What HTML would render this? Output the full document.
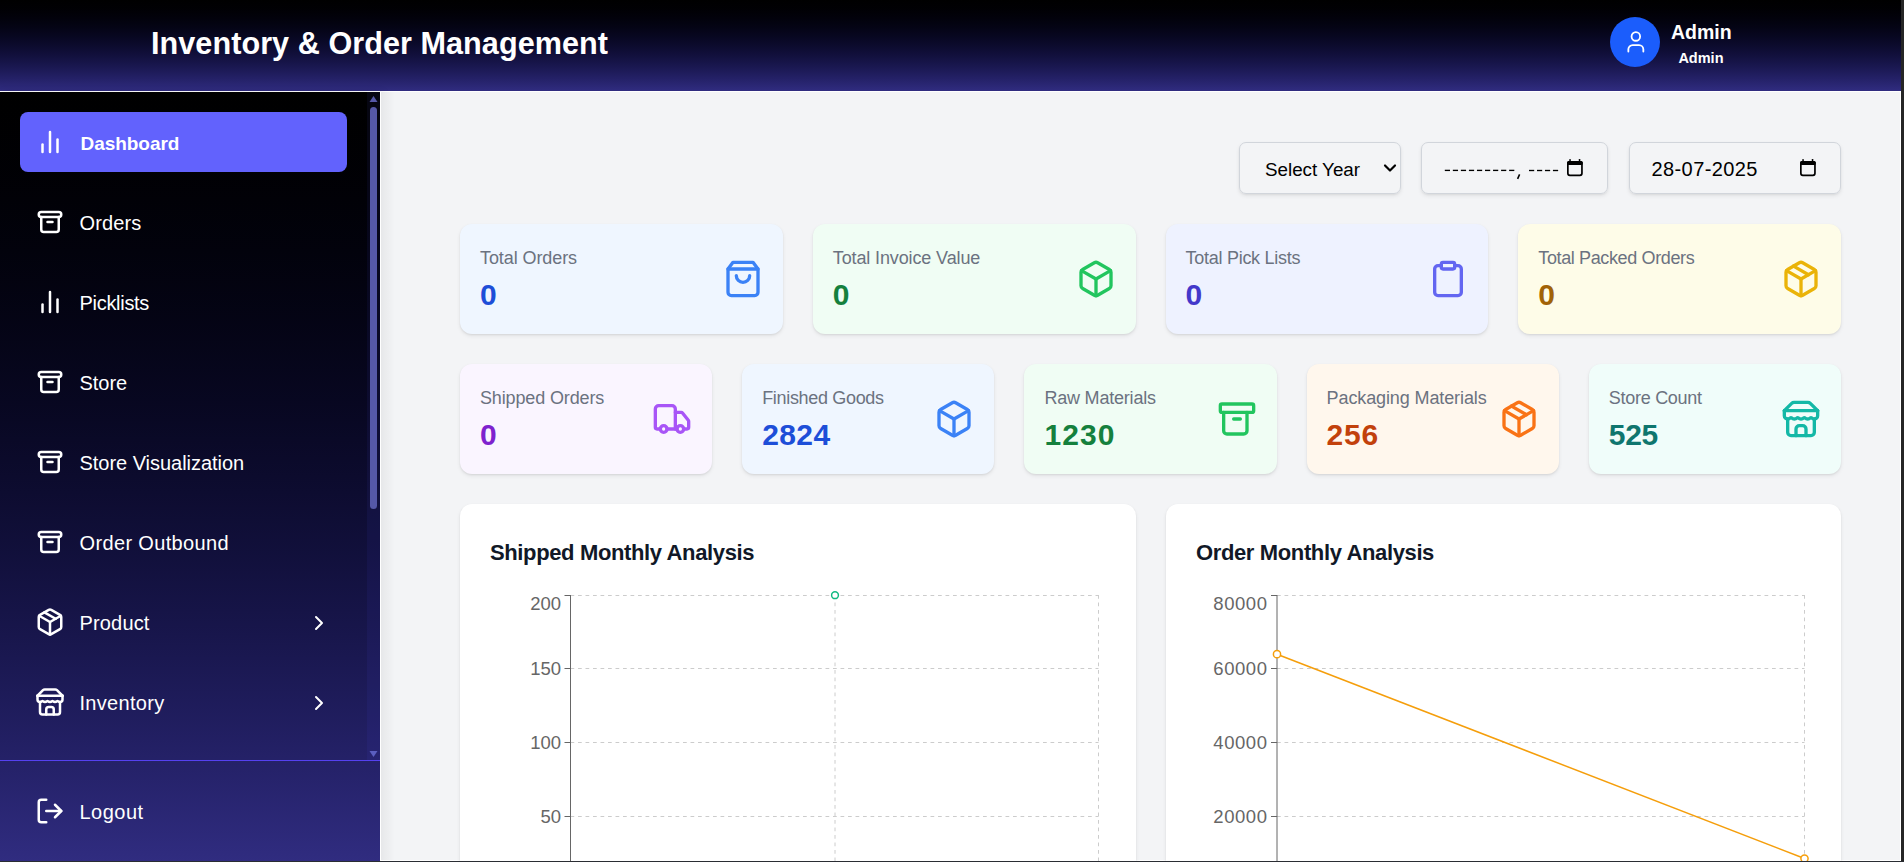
<!DOCTYPE html><html><head><meta charset="utf-8"><style>
*{box-sizing:border-box;margin:0;padding:0}
html,body{width:1904px;height:862px;overflow:hidden;background:#262626}
body{position:relative;font-family:"Liberation Sans",sans-serif}
.t{position:absolute;line-height:1;white-space:nowrap}
.ic{position:absolute;overflow:visible}
#hdr{position:absolute;left:0;top:0;width:1901px;height:92px;background:linear-gradient(to bottom,rgb(0.0,0.0,0.0) 0%,rgb(0.5,0.4,4.0) 10%,rgb(1.9,1.8,11.4) 20%,rgb(4.3,4.0,21.0) 30%,rgb(7.7,7.0,32.4) 40%,rgb(12.0,11.0,45.3) 50%,rgb(17.3,15.8,59.5) 60%,rgb(23.5,21.6,75.0) 70%,rgb(30.7,28.2,91.6) 80%,rgb(38.9,35.6,109.3) 90%,rgb(48.0,44.0,128.0) 100%);border-bottom:1px solid #fff}
#avatar{position:absolute;left:1610px;top:17px;width:50px;height:50px;border-radius:50%;background:#1b5dfc}
#side{position:absolute;left:0;top:92px;width:381px;height:770px;background:linear-gradient(to bottom,rgb(0.0,0.0,0.0) 0%,rgb(0.5,0.4,4.0) 10%,rgb(1.9,1.8,11.4) 20%,rgb(4.3,4.0,21.0) 30%,rgb(7.7,7.0,32.4) 40%,rgb(12.0,11.0,45.3) 50%,rgb(17.3,15.8,59.5) 60%,rgb(23.5,21.6,75.0) 70%,rgb(30.7,28.2,91.6) 80%,rgb(38.9,35.6,109.3) 90%,rgb(48.0,44.0,128.0) 100%);border-right:1px solid #fff;box-shadow:2px 0 8px rgba(0,0,0,.10)}
#main{position:absolute;left:381px;top:92px;width:1520px;height:769px;background:#f3f4f6;border-right:1px solid #fff;border-bottom:1px solid #fff}
#track{position:absolute;left:367px;top:92px;width:13px;height:668px;background:rgba(90,80,255,.07)}
#thumb{position:absolute;left:370px;top:107px;width:7px;height:402px;border-radius:4px;background:#5558a8}
#active{position:absolute;left:20px;top:112px;width:327px;height:60px;border-radius:8px;background:#6262fd}
#sep{position:absolute;left:0;top:760px;width:380px;height:1px;background:#5541f0}
.fld{position:absolute;border:1px solid #d1d5db;border-radius:7px;box-shadow:0 2px 4px rgba(0,0,0,.07),0 1px 2px rgba(0,0,0,.05)}
.card{position:absolute;border-radius:12px;box-shadow:0 2px 4px rgba(0,0,0,.07),0 1px 2px rgba(0,0,0,.07)}
.chart{position:absolute;border-radius:12px;background:#fff;box-shadow:0 2px 4px rgba(0,0,0,.07),0 1px 2px rgba(0,0,0,.07)}
#msh{position:absolute;left:381px;top:92px;width:14px;height:768px;background:linear-gradient(to right,rgba(0,0,0,.05),rgba(0,0,0,0))}
#fr{position:absolute;left:1901px;top:0;width:3px;height:862px;background:#262626}
#fb{position:absolute;left:0;top:861px;width:1904px;height:1px;background:#2a2d33}
</style></head><body><div id="hdr"></div>
<div class="t" style="left:151.00px;top:28.00px;font-size:30.6px;color:#fff;font-weight:700;letter-spacing:0.05px">Inventory &amp; Order Management</div>
<div id="avatar"></div>
<svg class="ic" style="left:1622.6px;top:28.8px;width:25.7px;height:25.7px" viewBox="0 0 24 24" fill="none" stroke="#fff" stroke-width="1.7" stroke-linecap="round" stroke-linejoin="round"><path d="M19 21v-2a4 4 0 0 0-4-4H9a4 4 0 0 0-4 4v2"/><circle cx="12" cy="7" r="4"/></svg>
<div class="t" style="left:1671.00px;top:23.29px;font-size:19.5px;color:#fff;font-weight:700;">Admin</div>
<div class="t" style="left:1678.40px;top:50.53px;font-size:14.5px;color:#fff;font-weight:700;">Admin</div>
<div id="side"></div>
<div id="track"></div><div id="thumb"></div>
<svg class="ic" style="left:367px;top:92px;width:13px;height:668px" viewBox="0 0 13 668"><path d="M2.5 10 L10.5 10 L6.5 4 Z" fill="#5558a8"/><path d="M2.5 659 L10.5 659 L6.5 665 Z" fill="#5b5fc0"/></svg>
<div id="active"></div>
<svg class="ic" style="left:35px;top:127px;width:30px;height:30px" viewBox="0 0 24 24" fill="none" stroke="#fff" stroke-width="2" stroke-linecap="round" stroke-linejoin="round"><line x1="18" x2="18" y1="20" y2="10"/><line x1="12" x2="12" y1="20" y2="4"/><line x1="6" x2="6" y1="20" y2="14"/></svg>
<div class="t" style="left:80.50px;top:133.72px;font-size:19px;color:#fff;font-weight:700;letter-spacing:-0.049px">Dashboard</div>
<svg class="ic" style="left:35px;top:207px;width:30px;height:30px" viewBox="0 0 24 24" fill="none" stroke="#fff" stroke-width="2" stroke-linecap="round" stroke-linejoin="round"><path d="M3 6a2 2 0 0 1 2-2h14a2 2 0 0 1 2 2a2 2 0 0 1-2 2h-14a2 2 0 0 1-2-2z"/><path d="M5 8v10a2 2 0 0 0 2 2h10a2 2 0 0 0 2-2v-10"/><path d="M10 12h4"/></svg>
<div class="t" style="left:79.50px;top:213.07px;font-size:20px;color:#fff;font-weight:400;letter-spacing:0.12px">Orders</div>
<svg class="ic" style="left:35px;top:287px;width:30px;height:30px" viewBox="0 0 24 24" fill="none" stroke="#fff" stroke-width="2" stroke-linecap="round" stroke-linejoin="round"><line x1="18" x2="18" y1="20" y2="10"/><line x1="12" x2="12" y1="20" y2="4"/><line x1="6" x2="6" y1="20" y2="14"/></svg>
<div class="t" style="left:79.50px;top:293.07px;font-size:20px;color:#fff;font-weight:400;letter-spacing:-0.299px">Picklists</div>
<svg class="ic" style="left:35px;top:367px;width:30px;height:30px" viewBox="0 0 24 24" fill="none" stroke="#fff" stroke-width="2" stroke-linecap="round" stroke-linejoin="round"><path d="M3 6a2 2 0 0 1 2-2h14a2 2 0 0 1 2 2a2 2 0 0 1-2 2h-14a2 2 0 0 1-2-2z"/><path d="M5 8v10a2 2 0 0 0 2 2h10a2 2 0 0 0 2-2v-10"/><path d="M10 12h4"/></svg>
<div class="t" style="left:79.50px;top:373.07px;font-size:20px;color:#fff;font-weight:400;letter-spacing:-0.024px">Store</div>
<svg class="ic" style="left:35px;top:447px;width:30px;height:30px" viewBox="0 0 24 24" fill="none" stroke="#fff" stroke-width="2" stroke-linecap="round" stroke-linejoin="round"><path d="M3 6a2 2 0 0 1 2-2h14a2 2 0 0 1 2 2a2 2 0 0 1-2 2h-14a2 2 0 0 1-2-2z"/><path d="M5 8v10a2 2 0 0 0 2 2h10a2 2 0 0 0 2-2v-10"/><path d="M10 12h4"/></svg>
<div class="t" style="left:79.50px;top:453.07px;font-size:20px;color:#fff;font-weight:400;letter-spacing:-0.033px">Store Visualization</div>
<svg class="ic" style="left:35px;top:527px;width:30px;height:30px" viewBox="0 0 24 24" fill="none" stroke="#fff" stroke-width="2" stroke-linecap="round" stroke-linejoin="round"><path d="M3 6a2 2 0 0 1 2-2h14a2 2 0 0 1 2 2a2 2 0 0 1-2 2h-14a2 2 0 0 1-2-2z"/><path d="M5 8v10a2 2 0 0 0 2 2h10a2 2 0 0 0 2-2v-10"/><path d="M10 12h4"/></svg>
<div class="t" style="left:79.50px;top:533.07px;font-size:20px;color:#fff;font-weight:400;letter-spacing:0.354px">Order Outbound</div>
<svg class="ic" style="left:35px;top:607px;width:30px;height:30px" viewBox="0 0 24 24" fill="none" stroke="#fff" stroke-width="2" stroke-linecap="round" stroke-linejoin="round"><path d="m7.5 4.27 9 5.15"/><path d="M21 8a2 2 0 0 0-1-1.73l-7-4a2 2 0 0 0-2 0l-7 4A2 2 0 0 0 3 8v8a2 2 0 0 0 1 1.73l7 4a2 2 0 0 0 2 0l7-4A2 2 0 0 0 21 16Z"/><path d="m3.3 7 8.7 5 8.7-5"/><path d="M12 22V12"/></svg>
<div class="t" style="left:79.50px;top:613.07px;font-size:20px;color:#fff;font-weight:400;letter-spacing:0.167px">Product</div>
<svg class="ic" style="left:307px;top:610.5px;width:24px;height:24px" viewBox="0 0 24 24" fill="none" stroke="#fff" stroke-width="2" stroke-linecap="round" stroke-linejoin="round"><path d="m9 18 6-6-6-6"/></svg>
<svg class="ic" style="left:35px;top:687px;width:30px;height:30px" viewBox="0 0 24 24" fill="none" stroke="#fff" stroke-width="2" stroke-linecap="round" stroke-linejoin="round"><path d="m2 7 4.41-4.41A2 2 0 0 1 7.83 2h8.34a2 2 0 0 1 1.42.59L22 7"/><path d="M4 12v8a2 2 0 0 0 2 2h12a2 2 0 0 0 2-2v-8"/><path d="M15 22v-4a2 2 0 0 0-2-2h-2a2 2 0 0 0-2 2v4"/><path d="M2 7h20"/><path d="M22 7v3a2 2 0 0 1-2 2a2.7 2.7 0 0 1-1.59-.63.7.7 0 0 0-.82 0A2.7 2.7 0 0 1 16 12a2.7 2.7 0 0 1-1.59-.63.7.7 0 0 0-.82 0A2.7 2.7 0 0 1 12 12a2.7 2.7 0 0 1-1.59-.63.7.7 0 0 0-.82 0A2.7 2.7 0 0 1 8 12a2.7 2.7 0 0 1-1.59-.63.7.7 0 0 0-.82 0A2.7 2.7 0 0 1 4 12a2 2 0 0 1-2-2V7"/></svg>
<div class="t" style="left:79.50px;top:693.07px;font-size:20px;color:#fff;font-weight:400;letter-spacing:0.3px">Inventory</div>
<svg class="ic" style="left:307px;top:690.5px;width:24px;height:24px" viewBox="0 0 24 24" fill="none" stroke="#fff" stroke-width="2" stroke-linecap="round" stroke-linejoin="round"><path d="m9 18 6-6-6-6"/></svg>
<div id="sep"></div>
<svg class="ic" style="left:35px;top:796px;width:30px;height:30px" viewBox="0 0 24 24" fill="none" stroke="#fff" stroke-width="2" stroke-linecap="round" stroke-linejoin="round"><path d="M9 21H5a2 2 0 0 1-2-2V5a2 2 0 0 1 2-2h4"/><polyline points="16 17 21 12 16 7"/><line x1="21" x2="9" y1="12" y2="12"/></svg>
<div class="t" style="left:79.50px;top:801.97px;font-size:20px;color:#fff;font-weight:400;letter-spacing:0.5px">Logout</div>
<div id="main"></div>
<div id="msh"></div>
<div class="fld" style="left:1239px;top:142px;width:162px;height:52px"></div>
<div class="t" style="left:1265.00px;top:160.79px;font-size:18.8px;color:#000;font-weight:400;">Select Year</div>
<svg class="ic" style="left:1383px;top:163px;width:14px;height:11px" viewBox="0 0 14 11" fill="none" stroke="#000" stroke-width="2.2" stroke-linecap="round" stroke-linejoin="round"><path d="M2 2.5l5 5 5-5"/></svg>
<div class="fld" style="left:1421px;top:142px;width:187px;height:52px"></div>
<svg class="ic" style="left:0;top:0;width:1904px;height:862px" viewBox="0 0 1904 862" fill="none" stroke="#000" stroke-width="1.35"><line x1="1444.80" y1="170.4" x2="1450.00" y2="170.4"/><line x1="1452.84" y1="170.4" x2="1458.04" y2="170.4"/><line x1="1460.88" y1="170.4" x2="1466.08" y2="170.4"/><line x1="1468.92" y1="170.4" x2="1474.12" y2="170.4"/><line x1="1476.96" y1="170.4" x2="1482.16" y2="170.4"/><line x1="1485.00" y1="170.4" x2="1490.20" y2="170.4"/><line x1="1493.04" y1="170.4" x2="1498.24" y2="170.4"/><line x1="1501.08" y1="170.4" x2="1506.28" y2="170.4"/><line x1="1509.12" y1="170.4" x2="1514.32" y2="170.4"/><line x1="1529.00" y1="170.5" x2="1534.20" y2="170.5"/><line x1="1536.98" y1="170.5" x2="1542.18" y2="170.5"/><line x1="1544.96" y1="170.5" x2="1550.16" y2="170.5"/><line x1="1552.94" y1="170.5" x2="1558.14" y2="170.5"/><line x1="1519.6" y1="174.4" x2="1517.6" y2="178.8" stroke-width="1.6"/></svg>
<svg class="ic" style="left:1567.1px;top:158.8px;width:16px;height:17.3px" viewBox="0 0 16 17.3"><rect x="0.85" y="2.95" width="14.1" height="13.4" rx="2" fill="none" stroke="#000" stroke-width="1.7"/><rect x="0" y="2.1" width="15.8" height="3.8" rx="1.5" fill="#000"/><rect x="2.3" y="0" width="1.5" height="3" rx=".5" fill="#000"/><rect x="11.8" y="0" width="1.5" height="3" rx=".5" fill="#000"/></svg>
<div class="fld" style="left:1629px;top:142px;width:212px;height:52px"></div>
<div class="t" style="left:1651.50px;top:159.07px;font-size:20px;color:#000;font-weight:400;letter-spacing:0.4px">28-07-2025</div>
<svg class="ic" style="left:1800px;top:158.8px;width:16px;height:17.3px" viewBox="0 0 16 17.3"><rect x="0.85" y="2.95" width="14.1" height="13.4" rx="2" fill="none" stroke="#000" stroke-width="1.7"/><rect x="0" y="2.1" width="15.8" height="3.8" rx="1.5" fill="#000"/><rect x="2.3" y="0" width="1.5" height="3" rx=".5" fill="#000"/><rect x="11.8" y="0" width="1.5" height="3" rx=".5" fill="#000"/></svg>
<div class="card" style="left:460.00px;top:224px;width:322.75px;height:110px;background:#eff6ff"></div>
<div class="t" style="left:480.00px;top:248.66px;font-size:18px;color:#6b7280;font-weight:400;letter-spacing:-0.091px;">Total Orders</div>
<div class="t" style="left:480.00px;top:280.21px;font-size:30px;color:#1d4ed8;font-weight:700;">0</div>
<svg class="ic" style="left:722.75px;top:259px;width:40px;height:40px" viewBox="0 0 24 24" fill="none" stroke="#3b82f6" stroke-width="2" stroke-linecap="round" stroke-linejoin="round"><path d="M6 2 3 6v14a2 2 0 0 0 2 2h14a2 2 0 0 0 2-2V6l-3-4Z"/><path d="M3 6h18"/><path d="M16 10a4 4 0 0 1-8 0"/></svg>
<div class="card" style="left:812.75px;top:224px;width:322.75px;height:110px;background:#f0fdf4"></div>
<div class="t" style="left:832.75px;top:248.66px;font-size:18px;color:#6b7280;font-weight:400;letter-spacing:-0.122px;">Total Invoice Value</div>
<div class="t" style="left:832.75px;top:280.21px;font-size:30px;color:#15803d;font-weight:700;">0</div>
<svg class="ic" style="left:1075.5px;top:259px;width:40px;height:40px" viewBox="0 0 24 24" fill="none" stroke="#22c55e" stroke-width="2" stroke-linecap="round" stroke-linejoin="round"><path d="M21 8a2 2 0 0 0-1-1.73l-7-4a2 2 0 0 0-2 0l-7 4A2 2 0 0 0 3 8v8a2 2 0 0 0 1 1.73l7 4a2 2 0 0 0 2 0l7-4A2 2 0 0 0 21 16Z"/><path d="m3.3 7 8.7 5 8.7-5"/><path d="M12 22V12"/></svg>
<div class="card" style="left:1165.50px;top:224px;width:322.75px;height:110px;background:#eef2ff"></div>
<div class="t" style="left:1185.50px;top:248.66px;font-size:18px;color:#6b7280;font-weight:400;letter-spacing:-0.267px;">Total Pick Lists</div>
<div class="t" style="left:1185.50px;top:280.21px;font-size:30px;color:#4338ca;font-weight:700;">0</div>
<svg class="ic" style="left:1428.25px;top:259px;width:40px;height:40px" viewBox="0 0 24 24" fill="none" stroke="#6366f1" stroke-width="2" stroke-linecap="round" stroke-linejoin="round"><rect width="8" height="4" x="8" y="2" rx="1" ry="1"/><path d="M16 4h2a2 2 0 0 1 2 2v14a2 2 0 0 1-2 2H6a2 2 0 0 1-2-2V6a2 2 0 0 1 2-2h2"/></svg>
<div class="card" style="left:1518.25px;top:224px;width:322.75px;height:110px;background:#fefce8"></div>
<div class="t" style="left:1538.25px;top:248.66px;font-size:18px;color:#6b7280;font-weight:400;letter-spacing:-0.367px;">Total Packed Orders</div>
<div class="t" style="left:1538.25px;top:280.21px;font-size:30px;color:#a16207;font-weight:700;">0</div>
<svg class="ic" style="left:1781.0px;top:259px;width:40px;height:40px" viewBox="0 0 24 24" fill="none" stroke="#eab308" stroke-width="2" stroke-linecap="round" stroke-linejoin="round"><path d="m7.5 4.27 9 5.15"/><path d="M21 8a2 2 0 0 0-1-1.73l-7-4a2 2 0 0 0-2 0l-7 4A2 2 0 0 0 3 8v8a2 2 0 0 0 1 1.73l7 4a2 2 0 0 0 2 0l7-4A2 2 0 0 0 21 16Z"/><path d="m3.3 7 8.7 5 8.7-5"/><path d="M12 22V12"/></svg>
<div class="card" style="left:460.00px;top:364px;width:252.20px;height:110px;background:#faf5ff"></div>
<div class="t" style="left:480.00px;top:388.66px;font-size:18px;color:#6b7280;font-weight:400;letter-spacing:-0.138px;">Shipped Orders</div>
<div class="t" style="left:480.00px;top:420.21px;font-size:30px;color:#7e22ce;font-weight:700;">0</div>
<svg class="ic" style="left:652.2px;top:399px;width:40px;height:40px" viewBox="0 0 24 24" fill="none" stroke="#a855f7" stroke-width="2" stroke-linecap="round" stroke-linejoin="round"><path d="M14 18V6a2 2 0 0 0-2-2H4a2 2 0 0 0-2 2v11a1 1 0 0 0 1 1h2"/><path d="M15 18H9"/><path d="M19 18h2a1 1 0 0 0 1-1v-3.65a1 1 0 0 0-.22-.624l-3.48-4.35A1 1 0 0 0 17.52 8H14"/><circle cx="17" cy="18" r="2"/><circle cx="7" cy="18" r="2"/></svg>
<div class="card" style="left:742.20px;top:364px;width:252.20px;height:110px;background:#eff6ff"></div>
<div class="t" style="left:762.20px;top:388.66px;font-size:18px;color:#6b7280;font-weight:400;letter-spacing:-0.323px;">Finished Goods</div>
<div class="t" style="left:762.20px;top:420.21px;font-size:30px;color:#1d4ed8;font-weight:700;letter-spacing:0.4px;">2824</div>
<svg class="ic" style="left:934.4px;top:399px;width:40px;height:40px" viewBox="0 0 24 24" fill="none" stroke="#3b82f6" stroke-width="2" stroke-linecap="round" stroke-linejoin="round"><path d="M21 8a2 2 0 0 0-1-1.73l-7-4a2 2 0 0 0-2 0l-7 4A2 2 0 0 0 3 8v8a2 2 0 0 0 1 1.73l7 4a2 2 0 0 0 2 0l7-4A2 2 0 0 0 21 16Z"/><path d="m3.3 7 8.7 5 8.7-5"/><path d="M12 22V12"/></svg>
<div class="card" style="left:1024.40px;top:364px;width:252.20px;height:110px;background:#f0fdf4"></div>
<div class="t" style="left:1044.40px;top:388.66px;font-size:18px;color:#6b7280;font-weight:400;letter-spacing:-0.2px;">Raw Materials</div>
<div class="t" style="left:1044.40px;top:420.21px;font-size:30px;color:#15803d;font-weight:700;letter-spacing:1.066px;">1230</div>
<svg class="ic" style="left:1216.6px;top:399px;width:40px;height:40px" viewBox="0 0 24 24" fill="none" stroke="#22c55e" stroke-width="2" stroke-linecap="round" stroke-linejoin="round"><rect width="20" height="5" x="2" y="3" rx="1"/><path d="M4 8v11a2 2 0 0 0 2 2h10a2 2 0 0 0 2-2V8"/><path d="M10 12h4"/></svg>
<div class="card" style="left:1306.60px;top:364px;width:252.20px;height:110px;background:#fff7ed"></div>
<div class="t" style="left:1326.60px;top:388.66px;font-size:18px;color:#6b7280;font-weight:400;letter-spacing:-0.111px;">Packaging Materials</div>
<div class="t" style="left:1326.60px;top:420.21px;font-size:30px;color:#c2410c;font-weight:700;letter-spacing:0.8px;">256</div>
<svg class="ic" style="left:1498.8px;top:399px;width:40px;height:40px" viewBox="0 0 24 24" fill="none" stroke="#f97316" stroke-width="2" stroke-linecap="round" stroke-linejoin="round"><path d="m7.5 4.27 9 5.15"/><path d="M21 8a2 2 0 0 0-1-1.73l-7-4a2 2 0 0 0-2 0l-7 4A2 2 0 0 0 3 8v8a2 2 0 0 0 1 1.73l7 4a2 2 0 0 0 2 0l7-4A2 2 0 0 0 21 16Z"/><path d="m3.3 7 8.7 5 8.7-5"/><path d="M12 22V12"/></svg>
<div class="card" style="left:1588.80px;top:364px;width:252.20px;height:110px;background:#f0fdfa"></div>
<div class="t" style="left:1608.80px;top:388.66px;font-size:18px;color:#6b7280;font-weight:400;letter-spacing:-0.28px;">Store Count</div>
<div class="t" style="left:1608.80px;top:420.21px;font-size:30px;color:#0f766e;font-weight:700;letter-spacing:-0.3px;">525</div>
<svg class="ic" style="left:1781.0px;top:399px;width:40px;height:40px" viewBox="0 0 24 24" fill="none" stroke="#14b8a6" stroke-width="2" stroke-linecap="round" stroke-linejoin="round"><path d="m2 7 4.41-4.41A2 2 0 0 1 7.83 2h8.34a2 2 0 0 1 1.42.59L22 7"/><path d="M4 12v8a2 2 0 0 0 2 2h12a2 2 0 0 0 2-2v-8"/><path d="M15 22v-4a2 2 0 0 0-2-2h-2a2 2 0 0 0-2 2v4"/><path d="M2 7h20"/><path d="M22 7v3a2 2 0 0 1-2 2a2.7 2.7 0 0 1-1.59-.63.7.7 0 0 0-.82 0A2.7 2.7 0 0 1 16 12a2.7 2.7 0 0 1-1.59-.63.7.7 0 0 0-.82 0A2.7 2.7 0 0 1 12 12a2.7 2.7 0 0 1-1.59-.63.7.7 0 0 0-.82 0A2.7 2.7 0 0 1 8 12a2.7 2.7 0 0 1-1.59-.63.7.7 0 0 0-.82 0A2.7 2.7 0 0 1 4 12a2 2 0 0 1-2-2V7"/></svg>
<div class="chart" style="left:460px;top:504px;width:675.5px;height:420px"></div>
<div class="chart" style="left:1165.5px;top:504px;width:675.5px;height:420px"></div>
<div class="t" style="left:490.00px;top:541.68px;font-size:22px;color:#111827;font-weight:700;letter-spacing:-0.37px">Shipped Monthly Analysis</div>
<div class="t" style="left:1196.00px;top:541.68px;font-size:22px;color:#111827;font-weight:700;letter-spacing:-0.37px">Order Monthly Analysis</div>
<svg class="ic" style="left:0;top:0;width:1904px;height:862px" viewBox="0 0 1904 862"><line x1="570.5" y1="595.5" x2="1098.5" y2="595.5" stroke="#ccc" stroke-dasharray="3.75 3.75"/><line x1="570.5" y1="668.5" x2="1098.5" y2="668.5" stroke="#ccc" stroke-dasharray="3.75 3.75"/><line x1="570.5" y1="742.5" x2="1098.5" y2="742.5" stroke="#ccc" stroke-dasharray="3.75 3.75"/><line x1="570.5" y1="816.5" x2="1098.5" y2="816.5" stroke="#ccc" stroke-dasharray="3.75 3.75"/><line x1="835" y1="595" x2="835" y2="862" stroke="#ccc" stroke-dasharray="3.75 3.75"/><line x1="1098.5" y1="595" x2="1098.5" y2="862" stroke="#ccc" stroke-dasharray="3.75 3.75"/><line x1="570.5" y1="595" x2="570.5" y2="862" stroke="#666"/><line x1="564.5" y1="595.5" x2="570.5" y2="595.5" stroke="#666"/><line x1="564.5" y1="668.5" x2="570.5" y2="668.5" stroke="#666"/><line x1="564.5" y1="742.5" x2="570.5" y2="742.5" stroke="#666"/><line x1="564.5" y1="816.5" x2="570.5" y2="816.5" stroke="#666"/><circle cx="835" cy="595.2" r="3.4" fill="#fff" stroke="#10b981" stroke-width="1.5"/><line x1="1277" y1="595.5" x2="1804.5" y2="595.5" stroke="#ccc" stroke-dasharray="3.75 3.75"/><line x1="1277" y1="668.5" x2="1804.5" y2="668.5" stroke="#ccc" stroke-dasharray="3.75 3.75"/><line x1="1277" y1="742.5" x2="1804.5" y2="742.5" stroke="#ccc" stroke-dasharray="3.75 3.75"/><line x1="1277" y1="816.5" x2="1804.5" y2="816.5" stroke="#ccc" stroke-dasharray="3.75 3.75"/><line x1="1804.5" y1="595" x2="1804.5" y2="862" stroke="#ccc" stroke-dasharray="3.75 3.75"/><line x1="1277" y1="595" x2="1277" y2="862" stroke="#666"/><line x1="1271" y1="595.5" x2="1277" y2="595.5" stroke="#666"/><line x1="1271" y1="668.5" x2="1277" y2="668.5" stroke="#666"/><line x1="1271" y1="742.5" x2="1277" y2="742.5" stroke="#666"/><line x1="1271" y1="816.5" x2="1277" y2="816.5" stroke="#666"/><polyline points="1277,654.2 1804.5,858.5" fill="none" stroke="#f59e0b" stroke-width="1.5"/><circle cx="1277" cy="654.2" r="3.6" fill="#fff" stroke="#f59e0b" stroke-width="1.5"/><circle cx="1804.5" cy="858.5" r="3.6" fill="#fff" stroke="#f59e0b" stroke-width="1.5"/></svg>
<div class="t" style="right:1343.00px;top:594.94px;font-size:18.5px;color:#666;font-weight:400;">200</div>
<div class="t" style="right:1343.00px;top:660.34px;font-size:18.5px;color:#666;font-weight:400;">150</div>
<div class="t" style="right:1343.00px;top:734.04px;font-size:18.5px;color:#666;font-weight:400;">100</div>
<div class="t" style="right:1343.00px;top:807.74px;font-size:18.5px;color:#666;font-weight:400;">50</div>
<div class="t" style="right:636.50px;top:594.94px;font-size:18.5px;color:#666;font-weight:400;letter-spacing:0.55px;">80000</div>
<div class="t" style="right:636.50px;top:660.34px;font-size:18.5px;color:#666;font-weight:400;letter-spacing:0.55px;">60000</div>
<div class="t" style="right:636.50px;top:734.04px;font-size:18.5px;color:#666;font-weight:400;letter-spacing:0.55px;">40000</div>
<div class="t" style="right:636.50px;top:807.74px;font-size:18.5px;color:#666;font-weight:400;letter-spacing:0.55px;">20000</div>
<div id="fr"></div><div id="fb"></div></body></html>
